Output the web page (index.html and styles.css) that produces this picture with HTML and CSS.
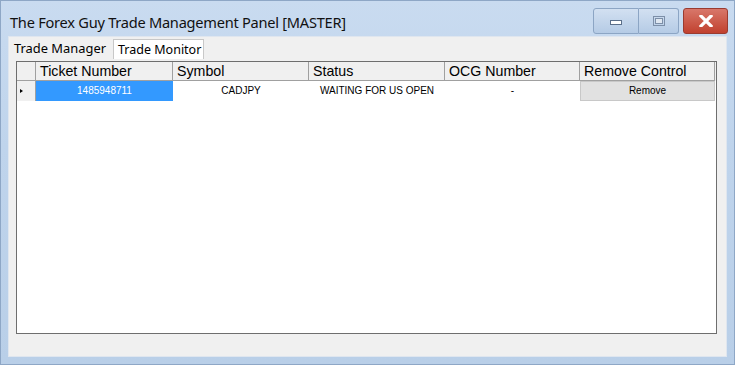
FILE: index.html
```html
<!DOCTYPE html>
<html>
<head>
<meta charset="utf-8">
<link rel="stylesheet" href="styles.css">
</head>
<body>
<div class="window">
  <div class="titlebar">
    <div class="title">The Forex Guy Trade Management Panel [MASTER]</div>
    <div class="caption-btns">
      <div class="cbtn min"><svg width="14" height="10" viewBox="0 0 14 10"><rect x="1.5" y="4.5" width="11" height="4" fill="#fff" stroke="#5b6f8a" stroke-width="1"/></svg></div>
      <div class="cbtn max"><svg width="14" height="12" viewBox="0 0 14 12"><rect x="1.5" y="1.5" width="11" height="9" fill="none" stroke="#7d8fa8" stroke-width="1"/><rect x="3.5" y="3.5" width="7" height="5" fill="#dfe7f1" stroke="#7d8fa8" stroke-width="1"/></svg></div>
      <div class="cbtn close"><svg width="14" height="12" viewBox="0 0 14 12"><path d="M2 1 L12 11 M12 1 L2 11" stroke="#fff" stroke-width="3.2" stroke-linecap="square"/></svg></div>
    </div>
  </div>
  <div class="client">
    <div class="tabs">
      <div class="tab">Trade Manager</div>
      <div class="tab active">Trade Monitor</div>
    </div>
    <div class="grid">
      <div class="row head">
        <div class="rh"></div>
        <div class="c">Ticket Number</div>
        <div class="c">Symbol</div>
        <div class="c">Status</div>
        <div class="c">OCG Number</div>
        <div class="c last">Remove Control</div>
      </div>
      <div class="row data">
        <div class="rh"><span class="arrow"></span></div>
        <div class="c sel">1485948711</div>
        <div class="c">CADJPY</div>
        <div class="c">WAITING FOR US OPEN</div>
        <div class="c">-</div>
        <div class="c last"><div class="btn">Remove</div></div>
      </div>
    </div>
  </div>
</div>
</body>
</html>
```
FILE: styles.css
```css
* { box-sizing: border-box; }
html, body { margin: 0; padding: 0; }
body {
  width: 735px;
  height: 365px;
  overflow: hidden;
  background: #bfd3ea;
  font-family: "Liberation Sans", Arial, sans-serif;
}
.window {
  width: 735px;
  height: 365px;
  display: flex;
  flex-direction: column;
  background: linear-gradient(180deg, #c9dbf0 0%, #bfd4ec 40%, #b9cfe8 100%);
  border: 1px solid #8ea7c6;
}
.titlebar {
  height: 35px;
  display: flex;
  align-items: flex-start;
  justify-content: space-between;
}
.title {
  font-family: "Noto Sans", sans-serif;
  font-size: 14.6px;
  color: #111;
  padding: 11px 0 0 9px;
  letter-spacing: -0.25px;
}
.caption-btns {
  display: flex;
  padding-top: 7px;
  padding-right: 6px;
}
.cbtn {
  height: 26px;
  display: flex;
  align-items: center;
  justify-content: center;
  border: 1px solid #8ca5c4;
}
.min {
  width: 46px;
  background: linear-gradient(180deg, #d2e0f1, #b5cbe5);
  border-radius: 3px 0 0 3px;
}
.max {
  width: 40px;
  border-left: none;
  background: linear-gradient(180deg, #d2e0f1, #b5cbe5);
  border-radius: 0 3px 3px 0;
}
.close {
  width: 45px;
  margin-left: 4px;
  background: linear-gradient(180deg, #d8776a, #c1412f);
  border-color: #9a3b30;
  border-radius: 3px;
}
.client {
  flex: 1;
  margin: 0 7px 7px 7px;
  background: #f0f0f0;
  border: 1px solid #dfe6ef;
  padding: 2px 9px 22px 7px;
  display: flex;
  flex-direction: column;
}
.tabs {
  display: flex;
  gap: 4px;
  height: 20px;
  align-items: flex-end;
  margin-left: -4px;
}
.tab {
  font-family: "Noto Sans", sans-serif;
  font-size: 12.9px;
  color: #000;
  padding: 0 3px 0 2px;
  height: 20px;
  line-height: 19px;
}
.tab.active {
  background: #fff;
  border: 1px solid #c8c8c8;
  border-bottom: none;
  padding: 0 2px 0 4px;
  font-size: 12.5px;
}
.grid {
  flex: 1;
  margin: 2px 0 0 0;
  background: #fff;
  border: 1px solid #6e6e6e;
  display: flex;
  flex-direction: column;
}
.row {
  display: grid;
  grid-template-columns: 19px 137px 136px 136px 135px 135px;
}
.head {
  height: 19px;
  background: #f0f0f0;
}
.head .c, .head .rh {
  font-size: 14.2px;
  line-height: 18px;
  padding-left: 4px;
  border-right: 1px solid #a0a0a0;
  border-bottom: 1px solid #a0a0a0;
  color: #000;
  white-space: nowrap;
  overflow: hidden;
}
.head .rh { padding-left: 0; }
.data { height: 20px; }
.data .rh {
  background: #f0f0f0;
  border-right: 1px solid #a0a0a0;
  display: flex;
  align-items: center;
  padding-left: 3px;
}
.arrow {
  width: 0;
  height: 0;
  border-top: 2.5px solid transparent;
  border-bottom: 2.5px solid transparent;
  border-left: 3px solid #000;
}
.data .c {
  font-size: 10px;
  text-align: center;
  line-height: 20px;
  color: #000;
}
.data .c.sel {
  background: #3399ff;
  color: #fff;
}
.btn {
  height: 20px;
  background: #e1e1e1;
  border: 1px solid #c8c8c8;
  font-size: 10px;
  line-height: 17px;
  text-align: center;
}
```
